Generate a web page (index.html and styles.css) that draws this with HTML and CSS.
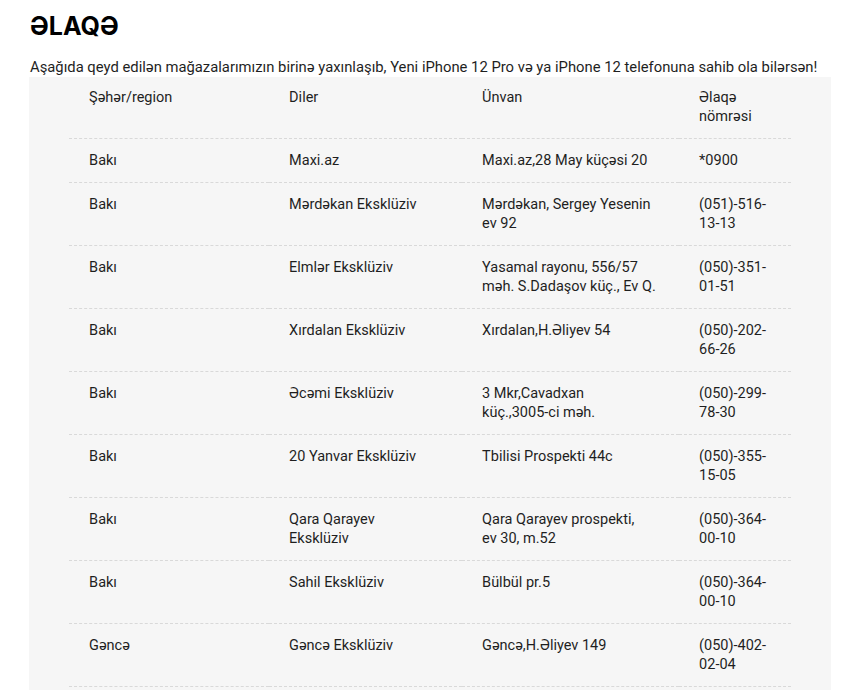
FILE: index.html
```html
<!DOCTYPE html>
<html lang="az">
<head>
  <meta charset="UTF-8">
  <meta name="viewport" content="width=device-width, initial-scale=1.0">
  <title>Əlaqə</title>
  <link rel="stylesheet" href="styles.css">
</head>
<body>
  <div class="page">
    <h1>ƏLAQƏ</h1>
    <p class="intro">Aşağıda qeyd edilən mağazalarımızın birinə yaxınlaşıb, Yeni iPhone 12 Pro və ya iPhone 12 telefonuna sahib ola bilərsən!</p>

    <div class="dealers">
      <table>
        <colgroup>
          <col class="c-city">
          <col class="c-dealer">
          <col class="c-address">
          <col class="c-phone">
        </colgroup>
        <thead>
          <tr>
            <th>Şəhər/region</th>
            <th>Diler</th>
            <th>Ünvan</th>
            <th>Əlaqə nömrəsi</th>
          </tr>
        </thead>
        <tbody>
          <tr>
            <td>Bakı</td>
            <td>Maxi.az</td>
            <td>Maxi.az,28 May küçəsi 20</td>
            <td>*0900</td>
          </tr>
          <tr>
            <td>Bakı</td>
            <td>Mərdəkan Eksklüziv</td>
            <td>Mərdəkan, Sergey Yesenin ev 92</td>
            <td>(051)-516-13-13</td>
          </tr>
          <tr>
            <td>Bakı</td>
            <td>Elmlər Eksklüziv</td>
            <td>Yasamal rayonu, 556/57 məh. S.Dadaşov küç., Ev Q.</td>
            <td>(050)-351-01-51</td>
          </tr>
          <tr>
            <td>Bakı</td>
            <td>Xırdalan Eksklüziv</td>
            <td>Xırdalan,H.Əliyev 54</td>
            <td>(050)-202-66-26</td>
          </tr>
          <tr>
            <td>Bakı</td>
            <td>Əcəmi Eksklüziv</td>
            <td>3 Mkr,Cavadxan küç.,3005&#8209;ci məh.</td>
            <td>(050)-299-78-30</td>
          </tr>
          <tr>
            <td>Bakı</td>
            <td>20 Yanvar Eksklüziv</td>
            <td>Tbilisi Prospekti 44c</td>
            <td>(050)-355-15-05</td>
          </tr>
          <tr>
            <td>Bakı</td>
            <td>Qara Qarayev Eksklüziv</td>
            <td>Qara Qarayev prospekti, ev&nbsp;30, m.52</td>
            <td>(050)-364-00-10</td>
          </tr>
          <tr>
            <td>Bakı</td>
            <td>Sahil Eksklüziv</td>
            <td>Bülbül pr.5</td>
            <td>(050)-364-00-10</td>
          </tr>
          <tr>
            <td>Gəncə</td>
            <td>Gəncə Eksklüziv</td>
            <td>Gəncə,H.Əliyev 149</td>
            <td>(050)-402-02-04</td>
          </tr>
        </tbody>
      </table>
    </div>
  </div>
</body>
</html>
```

FILE: styles.css
```css
body {
  margin: 0;
  font-family: Roboto, "Noto Sans", sans-serif;
  color: #1f1f1f;
  background: #fff;
}
.page {
  padding: 0 25px 0 29px;
}
h1 {
  margin: 0;
  padding: 11px 0 0 1px;
  font-family: Inter, Roboto, sans-serif;
  font-size: 25px;
  line-height: 30px;
  font-weight: 700;
  color: #000;
}
.intro {
  margin: 17px 0 0 1px;
  font-size: 14.8px;
  line-height: 19px;
}
.dealers {
  background: #f6f6f6;
  padding-bottom: 20px;
}
table {
  width: 90%;
  margin: 0 auto;
  border-collapse: collapse;
  table-layout: fixed;
  font-size: 14.5px;
  line-height: 19px;
}
.c-city { width: 200px; }
.c-dealer { width: 193px; }
.c-address { width: 217px; }
th, td {
  text-align: left;
  vertical-align: top;
  padding: 12px 20px;
  border-bottom: 1px dashed #d9d9d9;
}
td:nth-child(2) {
  padding-right: 27px;
}
th {
  font-weight: 400;
  padding: 11px 20px 12px;
}
```
